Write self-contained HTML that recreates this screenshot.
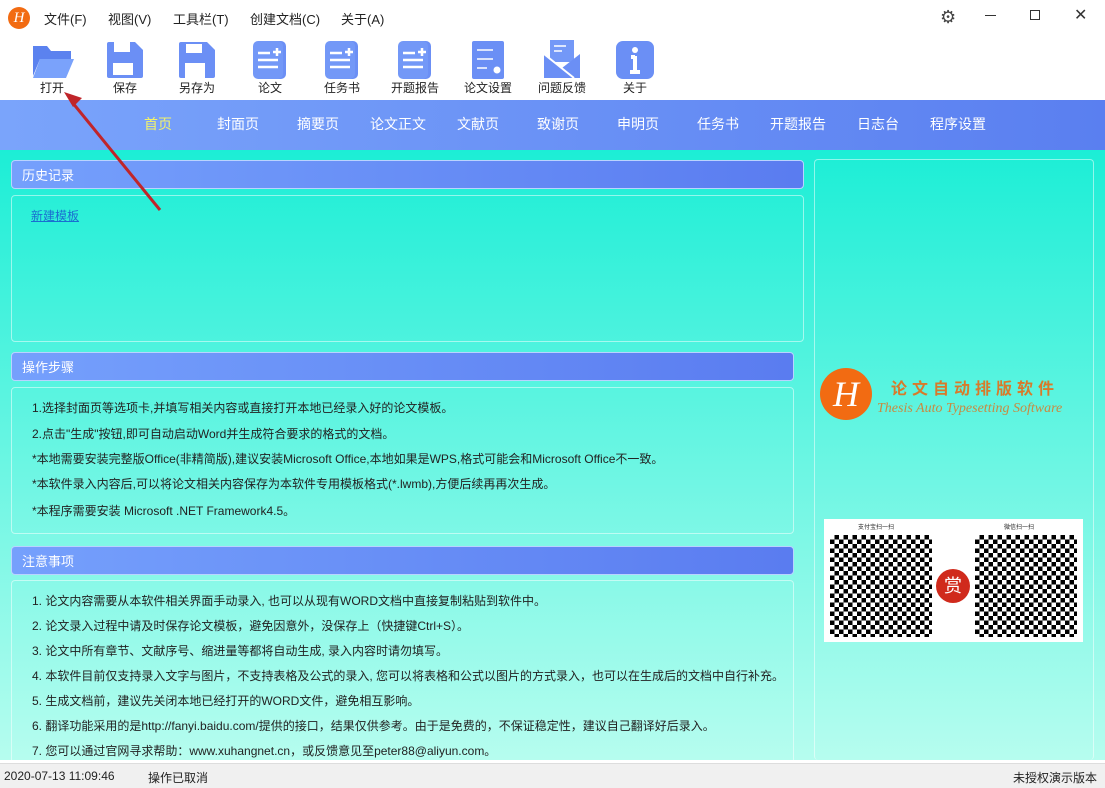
<!DOCTYPE html>
<html><head><meta charset="utf-8"><style>
*{margin:0;padding:0;box-sizing:border-box}
body{width:1105px;height:788px;overflow:hidden;position:relative;background:#fff;font-family:"Liberation Sans","Noto Sans CJK SC",sans-serif;font-size:12px;color:#222}
.abs{position:absolute}
.menu span{position:absolute;top:9px;font-size:13px;color:#222}
.tb{position:absolute;top:40px;width:60px;text-align:center;font-size:12px;line-height:14px}
.tb svg{display:block;margin:0 auto 1px}
.nav{position:absolute;top:100px;left:0;width:1105px;height:50px;background:linear-gradient(90deg,#7aa4fb,#5a7ff0)}
.nav span{position:absolute;top:14px;color:#fff;font-size:14px}
.main{position:absolute;top:150px;left:0;width:1105px;height:610px;background:linear-gradient(180deg,#1ceed6,#b6fdef)}
.hd{position:absolute;left:11px;height:29px;border-radius:4px;background:linear-gradient(90deg,#75a0fc,#5a7cf0);color:#fff;font-size:13px;padding:4px 0 0 10px;border:1px solid #b9d3ff}
.bx{position:absolute;left:11px;border:1px solid rgba(255,255,255,.5);border-radius:4px}
.ln{position:absolute;left:32px;font-size:12px;color:#222}
.status{position:absolute;top:763px;left:0;width:1105px;height:25px;background:#f0f0f0;border-top:1px solid #ddd;font-size:12px}
</style></head><body>
<div class="abs" style="left:8px;top:7px;width:22px;height:22px;border-radius:50%;background:#f26b12;color:#fff;font:italic 15px 'Liberation Serif',serif;text-align:center;line-height:22px">H</div>
<div class="menu"><span style="left:44px">文件(F)</span><span style="left:108px">视图(V)</span><span style="left:173px">工具栏(T)</span><span style="left:250px">创建文档(C)</span><span style="left:341px">关于(A)</span></div>
<div class="abs" style="left:940px;top:7px;font-size:18px;color:#444">⚙</div>
<div class="abs" style="left:985px;top:15px;width:11px;height:1px;background:#333"></div>
<div class="abs" style="left:1030px;top:10px;width:10px;height:10px;border:1px solid #333"></div>
<div class="abs" style="left:1074px;top:5px;font-size:16px;color:#333">✕</div>

<div class="tb" style="left:22px"><svg width="44" height="40"><path d="M3 6h14l4 5h20v8H10L3 36z" fill="#5b82ef"/><path d="M10 19h34l-8 19H3z" fill="#7aa2fb"/></svg>打开</div>
<div class="tb" style="left:95px"><svg width="44" height="40"><path d="M6 2h26l8 8v26a2 2 0 0 1-2 2H6a2 2 0 0 1-2-2V4a2 2 0 0 1 2-2z" fill="#6b8ff5"/><rect x="11" y="2" width="16" height="10" fill="#fff"/><rect x="10" y="23" width="20" height="12" fill="#fff"/></svg>保存</div>
<div class="tb" style="left:167px"><svg width="44" height="40"><path d="M6 2h26l8 8v26a2 2 0 0 1-2 2H6a2 2 0 0 1-2-2V4a2 2 0 0 1 2-2z" fill="#6b8ff5"/><rect x="11" y="4" width="16" height="9" fill="#fff"/><rect x="10" y="23" width="20" height="15" fill="#fff"/></svg>另存为</div>
<div class="tb" style="left:240px"><svg width="44" height="40"><rect x="8" y="1" width="30" height="38" rx="5" fill="#6b8ff5"/><rect x="5" y="1" width="30" height="38" rx="5" fill="#7398f7"/><path d="M10 13h12M10 20h20M10 27h20" stroke="#fff" stroke-width="2.5"/><path d="M29 8v8M25 12h8" stroke="#fff" stroke-width="2.5"/></svg>论文</div>
<div class="tb" style="left:312px"><svg width="44" height="40"><rect x="8" y="1" width="30" height="38" rx="5" fill="#6b8ff5"/><rect x="5" y="1" width="30" height="38" rx="5" fill="#7398f7"/><path d="M10 13h12M10 20h20M10 27h20" stroke="#fff" stroke-width="2.5"/><path d="M29 8v8M25 12h8" stroke="#fff" stroke-width="2.5"/></svg>任务书</div>
<div class="tb" style="left:385px"><svg width="44" height="40"><rect x="8" y="1" width="30" height="38" rx="5" fill="#6b8ff5"/><rect x="5" y="1" width="30" height="38" rx="5" fill="#7398f7"/><path d="M10 13h12M10 20h20M10 27h20" stroke="#fff" stroke-width="2.5"/><path d="M29 8v8M25 12h8" stroke="#fff" stroke-width="2.5"/></svg>开题报告</div>
<div class="tb" style="left:458px"><svg width="44" height="40"><rect x="6" y="1" width="32" height="38" rx="2" fill="#6b8ff5"/><path d="M11 10h16M11 19h16M11 28h10" stroke="#fff" stroke-width="1.5"/><circle cx="31" cy="30" r="3.5" fill="#fff"/></svg>论文设置</div>
<div class="tb" style="left:532px"><svg width="44" height="40"><rect x="10" y="0" width="24" height="22" fill="#7398f7"/><path d="M14 6h12M14 11h8" stroke="#fff" stroke-width="1.5"/><path d="M4 14l18 14 18-14v24H4z" fill="#6b8ff5"/><path d="M4 14l30 24" stroke="#fff" stroke-width="2"/></svg>问题反馈</div>
<div class="tb" style="left:605px"><svg width="44" height="40"><rect x="3" y="1" width="38" height="38" rx="7" fill="#6b8ff5"/><circle cx="22" cy="10" r="3" fill="#fff"/><path d="M22 16v16M17 32h10M18 17h4" stroke="#fff" stroke-width="4"/></svg>关于</div>

<div class="nav"><span style="left:144px;color:#f3f36a">首页</span><span style="left:217px">封面页</span><span style="left:297px">摘要页</span><span style="left:370px">论文正文</span><span style="left:457px">文献页</span><span style="left:537px">致谢页</span><span style="left:617px">申明页</span><span style="left:697px">任务书</span><span style="left:770px">开题报告</span><span style="left:857px">日志台</span><span style="left:930px">程序设置</span></div>

<div class="main">
<div class="hd" style="top:10px;width:793px">历史记录</div>
<div class="bx" style="top:45px;width:793px;height:147px"><span class="abs" style="left:19px;top:11px;color:#1a6fd0;text-decoration:underline">新建模板</span></div>
<div class="hd" style="top:202px;width:783px">操作步骤</div>
<div class="bx" style="top:237px;width:783px;height:147px"></div>
<div class="ln" style="top:249px">1.选择封面页等选项卡,并填写相关内容或直接打开本地已经录入好的论文模板。</div>
<div class="ln" style="top:275px">2.点击"生成"按钮,即可自动启动Word并生成符合要求的格式的文档。</div>
<div class="ln" style="top:300px">*本地需要安装完整版Office(非精简版),建议安装Microsoft Office,本地如果是WPS,格式可能会和Microsoft Office不一致。</div>
<div class="ln" style="top:325px">*本软件录入内容后,可以将论文相关内容保存为本软件专用模板格式(*.lwmb),方便后续再再次生成。</div>
<div class="ln" style="top:352px">*本程序需要安装 Microsoft .NET Framework4.5。</div>
<div class="hd" style="top:396px;width:783px">注意事项</div>
<div class="bx" style="top:430px;width:783px;height:190px;border-bottom:none"></div>
<div class="ln" style="top:442px">1. 论文内容需要从本软件相关界面手动录入, 也可以从现有WORD文档中直接复制粘贴到软件中。</div>
<div class="ln" style="top:467px">2. 论文录入过程中请及时保存论文模板，避免因意外，没保存上（快捷键Ctrl+S）。</div>
<div class="ln" style="top:492px">3. 论文中所有章节、文献序号、缩进量等都将自动生成, 录入内容时请勿填写。</div>
<div class="ln" style="top:517px">4. 本软件目前仅支持录入文字与图片，不支持表格及公式的录入, 您可以将表格和公式以图片的方式录入，也可以在生成后的文档中自行补充。</div>
<div class="ln" style="top:542px">5. 生成文档前，建议先关闭本地已经打开的WORD文件，避免相互影响。</div>
<div class="ln" style="top:567px">6. 翻译功能采用的是http://fanyi.baidu.com/提供的接口，结果仅供参考。由于是免费的，不保证稳定性，建议自己翻译好后录入。</div>
<div class="ln" style="top:592px">7. 您可以通过官网寻求帮助：www.xuhangnet.cn，或反馈意见至peter88@aliyun.com。</div>
<div class="bx" style="left:814px;top:9px;width:280px;height:601px;border-bottom:none"></div>
<div class="abs" style="left:820px;top:218px;width:52px;height:52px;border-radius:50%;background:#f26b12;color:#fff;font:italic 36px 'Liberation Serif',serif;text-align:center;line-height:52px">H</div>
<div class="abs" style="left:891px;top:225px;font-size:16px;color:#d87a2a;letter-spacing:5px;font-weight:bold">论文自动排版软件</div>
<div class="abs" style="left:877px;top:251px;font:italic 14px 'Liberation Serif',serif;color:#c88a40">Thesis Auto Typesetting Software</div>
<div class="abs" style="left:824px;top:369px;width:259px;height:123px;background:#fff">
 <div class="abs" style="left:34px;top:3px;font-size:6px">支付宝扫一扫</div>
 <div class="abs" style="left:180px;top:3px;font-size:6px">微信扫一扫</div>
 <div class="abs" style="left:6px;top:16px;width:102px;height:102px;background:repeating-conic-gradient(#000 0 25%,#fff 0 50%) 0 0/9px 9px"></div>
 <div class="abs" style="left:151px;top:16px;width:102px;height:102px;background:repeating-conic-gradient(#000 0 25%,#fff 0 50%) 0 0/9px 9px"></div>
 <div class="abs" style="left:112px;top:50px;width:34px;height:34px;border-radius:50%;background:#d02a1c;color:#fff;font-size:18px;text-align:center;line-height:34px">赏</div>
</div>
</div>

<div class="status"><span class="abs" style="left:4px;top:5px">2020-07-13 11:09:46</span><span class="abs" style="left:148px;top:5px">操作已取消</span><span class="abs" style="left:1013px;top:5px">未授权演示版本</span></div>
<svg class="abs" style="left:0;top:0" width="200" height="220"><path d="M160 210L72 102" stroke="#c0252a" stroke-width="3"/><path d="M64 92l18 6-9 9z" fill="#c0252a"/></svg>
</body></html>
